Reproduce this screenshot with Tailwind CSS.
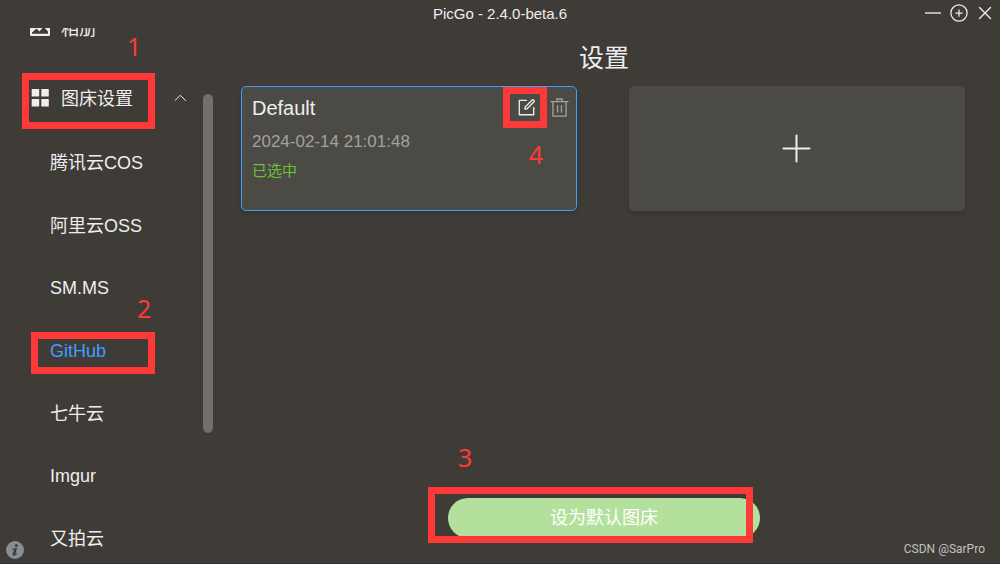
<!DOCTYPE html>
<html lang="zh-CN">
<head>
<meta charset="utf-8">
<meta name="viewport" content="width=device-width, initial-scale=1">
<title>PicGo</title>
<script src="https://cdn.jsdelivr.net/npm/@tailwindcss/browser@4"></script>
</head>
<body class="bg-[#3f3b36] text-[#eeeeee] font-['Liberation_Sans','Noto_Sans_CJK_SC',sans-serif]">
<div class="relative flex h-screen flex-col overflow-hidden border-b border-[#35322e]">

  <!-- Title bar -->
  <header class="relative flex h-7 shrink-0 items-center justify-center">
    <h1 class="text-[15px] leading-7">PicGo - 2.4.0-beta.6</h1>
    <div class="absolute right-[5px] top-0 flex h-[26px] items-center gap-1.5">
      <button type="button" aria-label="最小化" class="flex size-5 items-center justify-center">
        <svg class="size-5" viewBox="0 0 20 20" fill="none" stroke="#b4b2b0" stroke-width="2"><path d="M2 10H18"/></svg>
      </button>
      <button type="button" aria-label="迷你窗口" class="flex size-5 items-center justify-center">
        <svg class="size-5" viewBox="0 0 1024 1024" fill="currentColor"><path d="M352 480h320a32 32 0 1 1 0 64H352a32 32 0 0 1 0-64z"/><path d="M480 672V352a32 32 0 1 1 64 0v320a32 32 0 0 1-64 0z"/><path d="M512 896a384 384 0 1 0 0-768 384 384 0 0 0 0 768zm0 64a448 448 0 1 1 0-896 448 448 0 0 1 0 896z"/></svg>
      </button>
      <button type="button" aria-label="关闭" class="flex size-5 items-center justify-center">
        <svg class="size-5" viewBox="0 0 20 20" fill="none" stroke="currentColor" stroke-width="1.4" stroke-linecap="round"><path d="M4.500 4.500L15.500 15.500M15.500 4.500L4.500 15.500"/></svg>
      </button>
    </div>
  </header>

  <div class="flex min-h-0 flex-1">
    <!-- Side menu -->
    <nav class="relative w-[215px] shrink-0 overflow-hidden">
      <div class="-mt-[35px] text-[18px] leading-6">
        <a href="#" class="flex h-[70px] items-center pl-[29px]">
          <svg class="mr-2.5 size-[22px]" viewBox="0 0 22 22" fill="currentColor"><path fill-rule="evenodd" d="M2 2.500h18a1 1 0 0 1 1 1v14.500a1 1 0 0 1-1 1H2a1 1 0 0 1-1-1v-14.500a1 1 0 0 1 1-1zM3 16.800h16v-2.300L14.500 9.500 10.500 14.500 7.500 11.500 3 15.500z"/></svg>
          <span class="pt-0.5">相册</span>
        </a>
        <button type="button" aria-expanded="true" class="flex h-[69px] w-full items-center pl-[29px] pr-7">
          <svg class="mr-2.5 size-[22px]" viewBox="0 0 22 22" fill="currentColor"><rect x="2.700" y="2" width="7.500" height="7.500" rx="0.600"/><rect x="12.300" y="2" width="7.500" height="7.500" rx="0.600"/><rect x="2.700" y="12" width="7.500" height="7.500" rx="0.600"/><rect x="12.300" y="12" width="7.500" height="7.500" rx="0.600"/></svg>
          <span class="pt-0.5">图床设置</span>
          <svg class="ml-auto h-3.5 w-3.5" viewBox="0 0 14 14" fill="none" stroke="currentColor" stroke-width="1" stroke-linecap="round" stroke-linejoin="round"><path d="M2 9.500L7.300 4.300L12.600 9.500"/></svg>
        </button>
        <div class="grid h-[438px] grid-rows-7 pl-[50px]">
          <a href="#" class="flex items-center">腾讯云COS</a>
          <a href="#" class="flex items-center">阿里云OSS</a>
          <a href="#" class="flex items-center">SM.MS</a>
          <a href="#" class="flex items-center text-[#409eff]">GitHub</a>
          <a href="#" class="flex items-center">七牛云</a>
          <a href="#" class="flex items-center">Imgur</a>
          <a href="#" class="flex items-center">又拍云</a>
        </div>
      </div>
      <div class="absolute right-0.5 top-[66px] h-[339px] w-2.5 rounded-full bg-[#6f6f6f]"></div>
    </nav>

    <!-- Uploader configurations -->
    <main class="flex min-w-0 flex-1 flex-col pl-[26px] pr-[35px]">
      <h2 class="mt-3 pl-0.5 text-center text-[25px] leading-9">设置</h2>
      <div class="mt-2.5 grid grid-cols-2 gap-[52px]">
        <section class="relative h-[125px] rounded-[5px] border border-[#409eff] bg-[#4b4a45] px-2.5 pt-[9px] shadow-md">
          <div class="flex items-center">
            <h3 class="text-[20px] leading-[25px]">Default</h3>
            <div class="-mr-1 ml-auto flex items-center gap-3 pb-0.5">
              <button type="button" aria-label="编辑" class="size-[21px]">
                <svg class="size-[21px]" viewBox="0 0 1024 1024" fill="currentColor"><path d="M832 512a32 32 0 1 1 64 0v352a32 32 0 0 1-32 32H160a32 32 0 0 1-32-32V160a32 32 0 0 1 32-32h352a32 32 0 0 1 0 64H192v640h640V512z"/><path d="m469.952 554.240 52.800-7.552L847.104 222.400a32 32 0 1 0-45.248-45.248L477.440 501.440l-7.552 52.800zm422.400-422.400a96 96 0 0 1 0 135.808l-331.840 331.840a32 32 0 0 1-18.112 9.088L436.800 623.680a32 32 0 0 1-36.224-36.224l15.104-105.600a32 32 0 0 1 9.024-18.112l331.904-331.840a96 96 0 0 1 135.744 0z"/></svg>
              </button>
              <button type="button" aria-label="删除" class="size-[21px] text-[#a3a29f]">
                <svg class="size-[21px]" viewBox="0 0 1024 1024" fill="currentColor"><path d="M160 256H96a32 32 0 0 1 0-64h256V95.936a32 32 0 0 1 32-32h256a32 32 0 0 1 32 32V192h256a32 32 0 1 1 0 64h-64v672a32 32 0 0 1-32 32H192a32 32 0 0 1-32-32V256zm448-64v-64H416v64h192zM224 896h576V256H224v640zm192-128a32 32 0 0 1-32-32V416a32 32 0 0 1 64 0v320a32 32 0 0 1-32 32zm192 0a32 32 0 0 1-32-32V416a32 32 0 0 1 64 0v320a32 32 0 0 1-32 32z"/></svg>
              </button>
            </div>
          </div>
          <p class="mt-2.5 text-[17px] leading-[22px] text-[#a3a29f]">2024-02-14 21:01:48</p>
          <p class="mt-2 text-[15px] leading-5 text-[#67c23a]">已选中</p>
          <div class="pointer-events-none absolute right-[29px] top-0 h-[41px] w-11 border-[7px] border-[#fd3a38]"></div>
          <span class="pointer-events-none absolute right-[33px] top-[52px] font-['Noto_Sans',sans-serif] text-[25px] leading-[30px] text-[#fd3a38]">4</span>
        </section>
        <button type="button" aria-label="新增配置" class="flex h-[125px] items-center justify-center rounded-[5px] bg-[#4b4a45] shadow-md">
          <svg class="size-8" viewBox="0 0 32 32" fill="none" stroke="currentColor" stroke-width="2" stroke-linecap="round"><path d="M15.500 2.500V28.500M2.500 15.500H28.500"/></svg>
        </button>
      </div>
      <div class="mb-[25px] mt-auto flex justify-center pl-0.5">
        <div class="relative w-[312px]">
          <button type="button" class="block h-10 w-full rounded-full bg-[#b3e19d] text-[18px] leading-6 text-white">设为默认图床</button>
          <div class="pointer-events-none absolute -left-5 -top-[11px] h-14 w-[325px] border-[7px] border-[#fd3a38]"></div>
          <span class="pointer-events-none absolute -top-[56px] left-2.5 font-['Noto_Sans',sans-serif] text-[25px] leading-[30px] text-[#fd3a38]">3</span>
        </div>
      </div>
    </main>
  </div>

  <!-- About -->
  <button type="button" aria-label="关于" class="absolute bottom-1 left-1.5 size-[18px]">
    <svg class="size-[18px]" viewBox="0 0 18 18"><circle cx="9" cy="9" r="9" fill="#878d99"/><circle cx="10.300" cy="4.600" r="1.500" fill="#3f3b36"/><path d="M6.100 7.700L11.100 6.900 9.500 12.500Q9.300 13.300 9.800 13L10.900 12 11.400 12.500Q9.600 14.800 7.800 14.700 6.300 14.500 6.700 12.800L7.900 8.900Q8 8.500 7.500 8.400L6 8.400z" fill="#3f3b36"/></svg>
  </button>

  <!-- Step markers over the side menu -->
  <div class="pointer-events-none font-['Noto_Sans',sans-serif] text-[25px] leading-[30px] text-[#fd3a38]">
    <div class="absolute left-[22px] top-[73px] h-14 w-[133px] border-[7px] border-[#fd3a38]"></div>
    <span class="absolute left-[127px] top-[31px]">1</span>
    <div class="absolute left-[31px] top-[332px] h-[42px] w-[124px] border-[7px] border-[#fd3a38]"></div>
    <span class="absolute left-[137px] top-[293px]">2</span>
  </div>

  <p class="absolute bottom-1.5 right-[15px] font-[Roboto,sans-serif] text-[12px] leading-4 text-[#c4c2c0]">CSDN @SarPro</p>
</div>
</body>
</html>
